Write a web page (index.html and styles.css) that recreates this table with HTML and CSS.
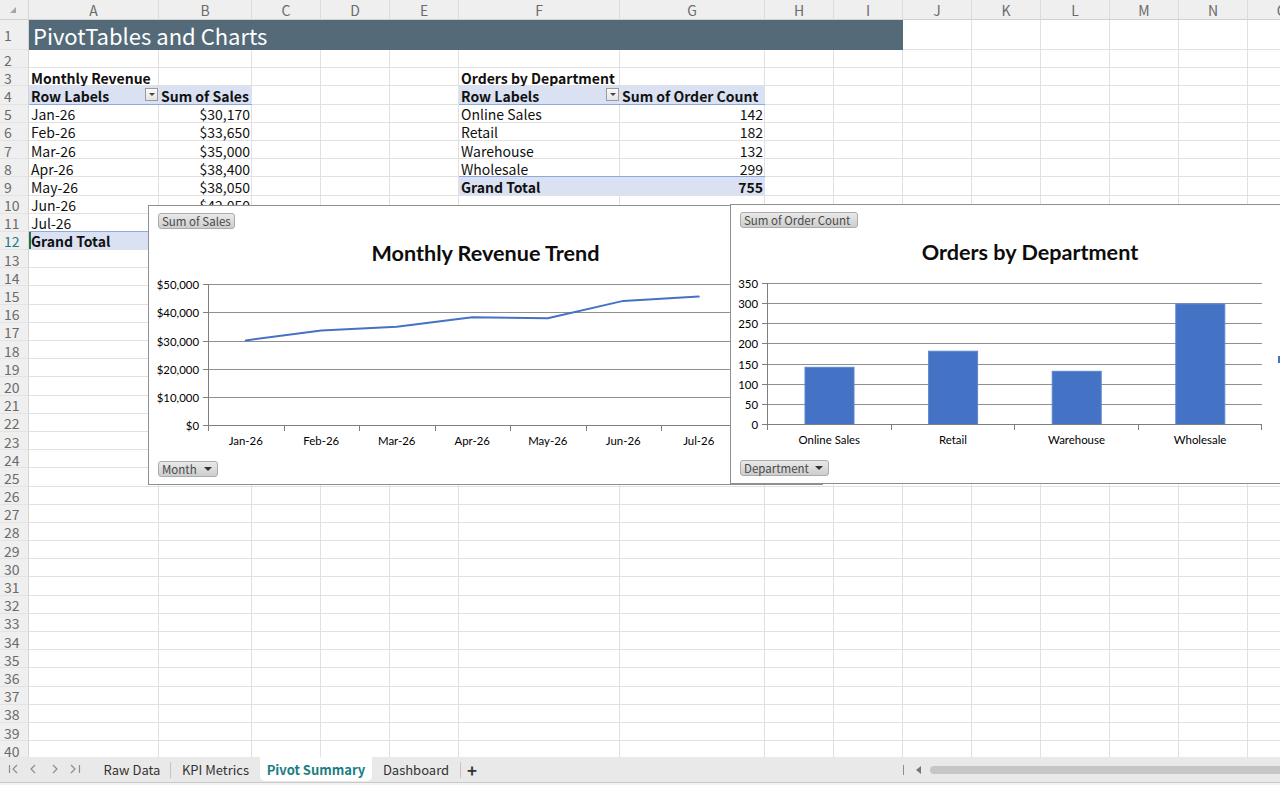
FILE: index.html
```html
<!DOCTYPE html>
<html lang="en">
<head>
<meta charset="utf-8">
<title>Pivot Summary</title>
<link rel="stylesheet" href="styles.css">
</head>
<body>
<div class="app">
  <div class="sheet">
    <div class="corner"><span class="tri"></span></div>
    <div class="ch">A</div><div class="ch">B</div><div class="ch">C</div><div class="ch">D</div><div class="ch">E</div><div class="ch">F</div><div class="ch">G</div><div class="ch">H</div><div class="ch">I</div><div class="ch">J</div><div class="ch">K</div><div class="ch">L</div><div class="ch">M</div><div class="ch">N</div><div class="ch">O</div>

    <div class="rh r1">1</div><div class="title">PivotTables and Charts</div><div class="c s6"></div>
    <div class="rh">2</div><div class="c s15"></div>
    <div class="rh">3</div><div class="c b">Monthly Revenue</div><div class="c s4"></div><div class="c b">Orders by Department</div><div class="c s9"></div>
    <div class="rh">4</div><div class="c ph">Row Labels<span class="dd"></span></div><div class="c ph">Sum of Sales</div><div class="c s3"></div><div class="c ph">Row Labels<span class="dd"></span></div><div class="c ph">Sum of Order Count</div><div class="c s8"></div>
    <div class="rh">5</div><div class="c">Jan-26</div><div class="c num">$30,170</div><div class="c s3"></div><div class="c">Online Sales</div><div class="c num">142</div><div class="c s8"></div>
    <div class="rh">6</div><div class="c">Feb-26</div><div class="c num">$33,650</div><div class="c s3"></div><div class="c">Retail</div><div class="c num">182</div><div class="c s8"></div>
    <div class="rh">7</div><div class="c">Mar-26</div><div class="c num">$35,000</div><div class="c s3"></div><div class="c">Warehouse</div><div class="c num">132</div><div class="c s8"></div>
    <div class="rh">8</div><div class="c">Apr-26</div><div class="c num">$38,400</div><div class="c s3"></div><div class="c">Wholesale</div><div class="c num">299</div><div class="c s8"></div>
    <div class="rh">9</div><div class="c">May-26</div><div class="c num">$38,050</div><div class="c s3"></div><div class="c gt">Grand Total</div><div class="c gt num">755</div><div class="c s8"></div>
    <div class="rh">10</div><div class="c">Jun-26</div><div class="c num">$42,050</div><div class="c s13"></div>
    <div class="rh">11</div><div class="c">Jul-26</div><div class="c num"></div><div class="c s13"></div>
    <div class="rh act">12</div><div class="c gt sel">Grand Total</div><div class="c gt num"></div><div class="c s13"></div>
    <div class="rh">13</div><div class="c s15"></div>
    <div class="rh">14</div><div class="c s15"></div>
    <div class="rh">15</div><div class="c s15"></div>
    <div class="rh">16</div><div class="c s15"></div>
    <div class="rh">17</div><div class="c s15"></div>
    <div class="rh">18</div><div class="c s15"></div>
    <div class="rh">19</div><div class="c s15"></div>
    <div class="rh">20</div><div class="c s15"></div>
    <div class="rh">21</div><div class="c s15"></div>
    <div class="rh">22</div><div class="c s15"></div>
    <div class="rh">23</div><div class="c s15"></div>
    <div class="rh">24</div><div class="c s15"></div>
    <div class="rh">25</div><div class="c s15"></div>
    <div class="rh">26</div><div class="c s15"></div>
    <div class="rh">27</div><div class="c s15"></div>
    <div class="rh">28</div><div class="c s15"></div>
    <div class="rh">29</div><div class="c s15"></div>
    <div class="rh">30</div><div class="c s15"></div>
    <div class="rh">31</div><div class="c s15"></div>
    <div class="rh">32</div><div class="c s15"></div>
    <div class="rh">33</div><div class="c s15"></div>
    <div class="rh">34</div><div class="c s15"></div>
    <div class="rh">35</div><div class="c s15"></div>
    <div class="rh">36</div><div class="c s15"></div>
    <div class="rh">37</div><div class="c s15"></div>
    <div class="rh">38</div><div class="c s15"></div>
    <div class="rh">39</div><div class="c s15"></div>
    <div class="rh">40</div><div class="c s15"></div>

    <div class="chart chart-line">
      <div class="pbtn w-sales">Sum of Sales</div>
      <div class="ctitle">Monthly Revenue Trend</div>
      <svg class="plot" width="673" height="190" viewBox="0 0 673 190">
        <g class="grid">
          <line x1="59.5" y1="19.5" x2="588" y2="19.5"/>
          <line x1="59.5" y1="47.5" x2="588" y2="47.5"/>
          <line x1="59.5" y1="76.5" x2="588" y2="76.5"/>
          <line x1="59.5" y1="104.5" x2="588" y2="104.5"/>
          <line x1="59.5" y1="132.5" x2="588" y2="132.5"/>
        </g>
        <g class="axis">
          <line x1="59.5" y1="19.5" x2="59.5" y2="160.5"/>
          <line x1="54" y1="160.5" x2="588" y2="160.5"/>
          <line x1="54" y1="19.5" x2="59.5" y2="19.5"/>
          <line x1="54" y1="47.5" x2="59.5" y2="47.5"/>
          <line x1="54" y1="76.5" x2="59.5" y2="76.5"/>
          <line x1="54" y1="104.5" x2="59.5" y2="104.5"/>
          <line x1="54" y1="132.5" x2="59.5" y2="132.5"/>
          <line x1="59.5" y1="160.5" x2="59.5" y2="166"/>
          <line x1="135.5" y1="160.5" x2="135.5" y2="166"/>
          <line x1="210.5" y1="160.5" x2="210.5" y2="166"/>
          <line x1="286.5" y1="160.5" x2="286.5" y2="166"/>
          <line x1="361.5" y1="160.5" x2="361.5" y2="166"/>
          <line x1="437.5" y1="160.5" x2="437.5" y2="166"/>
          <line x1="512.5" y1="160.5" x2="512.5" y2="166"/>
          <line x1="588" y1="160.5" x2="588" y2="166"/>
        </g>
        <g class="ylab">
          <text x="50" y="23.5">$50,000</text>
          <text x="50" y="51.5">$40,000</text>
          <text x="50" y="80.5">$30,000</text>
          <text x="50" y="108.5">$20,000</text>
          <text x="50" y="136.5">$10,000</text>
          <text x="50" y="164.5">$0</text>
        </g>
        <g class="xlab">
          <text x="96.75" y="180">Jan-26</text>
          <text x="172.25" y="180">Feb-26</text>
          <text x="247.75" y="180">Mar-26</text>
          <text x="323.25" y="180">Apr-26</text>
          <text x="398.75" y="180">May-26</text>
          <text x="474.25" y="180">Jun-26</text>
          <text x="549.75" y="180">Jul-26</text>
        </g>
        <polyline class="series" points="96.75,75.4 172.25,65.6 247.75,61.8 323.25,52.2 398.75,53.2 474.25,35.9 549.75,31.6"/>
      </svg>
      <div class="pbtn drop w-month">Month<span class="arr"></span></div>
    </div>

    <div class="chart chart-bar">
      <div class="pbtn w-count">Sum of Order Count</div>
      <div class="ctitle">Orders by Department</div>
      <svg class="plot" width="598" height="190" viewBox="0 0 598 190">
        <g class="grid">
          <line x1="36.5" y1="19.5" x2="531" y2="19.5"/>
          <line x1="36.5" y1="39.5" x2="531" y2="39.5"/>
          <line x1="36.5" y1="59.5" x2="531" y2="59.5"/>
          <line x1="36.5" y1="79.5" x2="531" y2="79.5"/>
          <line x1="36.5" y1="100.5" x2="531" y2="100.5"/>
          <line x1="36.5" y1="120.5" x2="531" y2="120.5"/>
          <line x1="36.5" y1="140.5" x2="531" y2="140.5"/>
        </g>
        <g class="bars">
          <rect x="74" y="103.3" width="49" height="57.2"/>
          <rect x="197.6" y="87.2" width="49" height="73.3"/>
          <rect x="321.2" y="107.3" width="49" height="53.2"/>
          <rect x="444.8" y="40" width="49" height="120.5"/>
        </g>
        <g class="axis">
          <line x1="36.5" y1="19.5" x2="36.5" y2="160.5"/>
          <line x1="31" y1="160.5" x2="531" y2="160.5"/>
          <line x1="31" y1="19.5" x2="36.5" y2="19.5"/>
          <line x1="31" y1="39.5" x2="36.5" y2="39.5"/>
          <line x1="31" y1="59.5" x2="36.5" y2="59.5"/>
          <line x1="31" y1="79.5" x2="36.5" y2="79.5"/>
          <line x1="31" y1="100.5" x2="36.5" y2="100.5"/>
          <line x1="31" y1="120.5" x2="36.5" y2="120.5"/>
          <line x1="31" y1="140.5" x2="36.5" y2="140.5"/>
          <line x1="36.5" y1="160.5" x2="36.5" y2="166"/>
          <line x1="160.5" y1="160.5" x2="160.5" y2="166"/>
          <line x1="283.5" y1="160.5" x2="283.5" y2="166"/>
          <line x1="407.5" y1="160.5" x2="407.5" y2="166"/>
          <line x1="530.5" y1="160.5" x2="530.5" y2="166"/>
        </g>
        <g class="ylab">
          <text x="27" y="23.5">350</text>
          <text x="27" y="43.5">300</text>
          <text x="27" y="63.5">250</text>
          <text x="27" y="83.5">200</text>
          <text x="27" y="104.5">150</text>
          <text x="27" y="124.5">100</text>
          <text x="27" y="144.5">50</text>
          <text x="27" y="164.5">0</text>
        </g>
        <g class="xlab">
          <text x="98.3" y="180">Online Sales</text>
          <text x="221.9" y="180">Retail</text>
          <text x="345.5" y="180">Warehouse</text>
          <text x="469.1" y="180">Wholesale</text>
        </g>
        <rect class="legend-key" x="547" y="92" width="7" height="7"/>
      </svg>
      <div class="pbtn drop w-dept">Department<span class="arr"></span></div>
    </div>
  </div>

  <div class="tabbar">
    <svg class="nav" width="94" height="25" viewBox="0 0 94 25">
      <g>
        <line x1="9.5" y1="8" x2="9.5" y2="16"/>
        <polyline points="17,8 13,12 17,16"/>
        <polyline points="35,8 31,12 35,16"/>
        <polyline points="53,8 57,12 53,16"/>
        <polyline points="71,8 75,12 71,16"/>
        <line x1="79.5" y1="8" x2="79.5" y2="16"/>
      </g>
    </svg>
    <div class="tab t1">Raw Data</div>
    <span class="sep"></span>
    <div class="tab t2">KPI Metrics</div>
    <div class="tab t3 active">Pivot Summary</div>
    <div class="tab t4">Dashboard</div>
    <span class="sep"></span>
    <div class="add">+</div>
    <div class="hscroll">
      <span class="hsep"></span>
      <span class="larr"></span>
      <span class="track"></span>
    </div>
  </div>
  <div class="strip"></div>
</div>
</body>
</html>
```

FILE: styles.css
```css
* { box-sizing: border-box; margin: 0; padding: 0; }

body {
  margin: 0;
  width: 1280px;
  height: 785px;
  overflow: hidden;
  background: #ffffff;
  font-family: "Noto Sans CJK SC", "Noto Sans", sans-serif;
  color: #000;
}

.app {
  width: 1280px;
  height: 785px;
  display: flex;
  flex-direction: column;
}

/* ---------- sheet grid ---------- */
.sheet {
  position: relative;
  height: 757px;
  flex: none;
  overflow: hidden;
  display: grid;
  grid-template-columns: 29px 130px 93px 69px 69px 69px 161px 145px 69px 69px 69px 69px 69px 69px 69px 69px;
  grid-template-rows: 20px 30px repeat(39, 18.2px);
  background-color: #ffffff;
  background-image:
    linear-gradient(#e1e1e1, #e1e1e1), linear-gradient(#e1e1e1, #e1e1e1),
    linear-gradient(#e1e1e1, #e1e1e1), linear-gradient(#e1e1e1, #e1e1e1),
    linear-gradient(#e1e1e1, #e1e1e1), linear-gradient(#e1e1e1, #e1e1e1),
    linear-gradient(#e1e1e1, #e1e1e1), linear-gradient(#e1e1e1, #e1e1e1),
    linear-gradient(#e1e1e1, #e1e1e1), linear-gradient(#e1e1e1, #e1e1e1),
    linear-gradient(#e1e1e1, #e1e1e1), linear-gradient(#e1e1e1, #e1e1e1),
    linear-gradient(#e1e1e1, #e1e1e1), linear-gradient(#e1e1e1, #e1e1e1);
  background-size: 1px 100%;
  background-repeat: no-repeat;
  background-position:
    158px 0, 251px 0, 320px 0, 389px 0, 458px 0, 619px 0, 764px 0,
    833px 0, 902px 0, 971px 0, 1040px 0, 1109px 0, 1178px 0, 1247px 0;
}

.corner {
  background: #efefef;
  border-right: 1px solid #d6d6d6;
  border-bottom: 1px solid #d0d0d0;
  padding: 7px 0 0 10px;
}
.tri {
  display: block;
  width: 0;
  height: 0;
  border-left: 6px solid transparent;
  border-bottom: 6px solid #a6a6a6;
}

.ch {
  background: #efefef;
  border-right: 1px solid #dcdcdc;
  border-bottom: 1px solid #d0d0d0;
  color: #6b6b6b;
  font-size: 14px;
  display: flex;
  align-items: center;
  justify-content: center;
}

.rh {
  background: #efefef;
  border-right: 1px solid #d4d4d4;
  border-bottom: 1px solid #e3e3e3;
  color: #6b6b6b;
  font-size: 14px;
  display: flex;
  align-items: center;
  padding: 2px 0 0 4px;
  white-space: nowrap;
}
.rh.r1 { padding-top: 0; }
.rh.act { color: #217a86; }

.c {
  border-bottom: 1px solid #e1e1e1;
  font-size: 14px;
  display: flex;
  align-items: center;
  padding: 2px 2px 0;
  white-space: nowrap;
  min-width: 0;
  color: #111;
}
.s3 { grid-column: span 3; }
.s4 { grid-column: span 4; }
.s6 { grid-column: span 6; }
.s8 { grid-column: span 8; }
.s9 { grid-column: span 9; }
.s13 { grid-column: span 13; }
.s15 { grid-column: span 15; }

.title {
  grid-column: span 9;
  background: #546a79;
  color: #ffffff;
  font-size: 22px;
  display: flex;
  align-items: center;
  padding-left: 4px;
  white-space: nowrap;
}

.b { font-weight: 700; }
.num { justify-content: flex-end; }

.ph {
  background: #d9e1f2;
  font-weight: 700;
  border-bottom: 1px solid #8ea9db;
  justify-content: space-between;
  padding-right: 1px;
}
.ph + .ph { justify-content: flex-start; }

.dd {
  width: 13px;
  height: 13px;
  margin-top: -2px;
  border: 1px solid #9c9c9c;
  background: linear-gradient(#fbfbfb, #e4e4e4);
  display: flex;
  align-items: center;
  justify-content: center;
}
.dd::after {
  content: "";
  border-left: 3px solid transparent;
  border-right: 3px solid transparent;
  border-top: 3px solid #444;
}

.gt {
  background: #d9e1f2;
  font-weight: 700;
  margin-top: -1px;
  border-top: 1px solid #8ea9db;
}
.gt.num { justify-content: flex-end; }
.sel { box-shadow: inset 2px 0 0 #217346; }

/* ---------- charts ---------- */
.chart {
  position: absolute;
  height: 280px;
  background: #ffffff;
  border: 1px solid #8f8f8f;
  display: flex;
  flex-direction: column;
  padding-top: 7px;
  font-family: Lato, "Liberation Sans", sans-serif;
}
.chart-line { left: 148px; top: 205px; width: 675px; }
.chart-bar { left: 730px; top: 204px; width: 600px; }

.pbtn {
  align-self: flex-start;
  margin-left: 9px;
  height: 16px;
  border: 1px solid #ababab;
  border-radius: 3px;
  background: linear-gradient(#e9e9e9, #cdcdcd);
  color: #4a4a4a;
  font-family: "Noto Sans CJK SC", "Noto Sans", sans-serif;
  font-size: 11.5px;
  line-height: 14px;
  padding: 0 3px;
  white-space: nowrap;
  display: flex;
  align-items: center;
}
.w-sales { width: 77px; }
.w-count { width: 118px; }
.w-month { width: 60px; }
.w-dept { width: 89px; }
.pbtn.drop { justify-content: space-between; margin-top: 6px; }
.arr {
  border-left: 4px solid transparent;
  border-right: 4px solid transparent;
  border-top: 4px solid #333;
  margin-right: 2px;
}

.ctitle {
  margin-top: 12px;
  height: 24px;
  line-height: 24px;
  text-align: center;
  font-size: 21.6px;
  font-weight: 700;
  color: #0d0d0d;
  white-space: nowrap;
}

.plot { display: block; flex: none; }
.plot .grid line { stroke: #8f8f8f; stroke-width: 1; shape-rendering: crispEdges; }
.plot .axis line { stroke: #7f7f7f; stroke-width: 1; shape-rendering: crispEdges; }
.plot text { font-family: Lato, "Liberation Sans", sans-serif; font-size: 11.4px; fill: #000; }
.plot .ylab text { text-anchor: end; }
.plot .xlab text { text-anchor: middle; }
.plot .series { fill: none; stroke: #4472c4; stroke-width: 2; stroke-linejoin: round; stroke-linecap: round; }
.plot .bars rect { fill: #4472c4; stroke: #5b86d0; stroke-width: 1; }
.plot .legend-key { fill: #4472c4; }

/* ---------- tab bar ---------- */
.tabbar {
  height: 26px;
  flex: none;
  background: #e9e9e9;
  border-bottom: 1px solid #c9c9c9;
  display: flex;
  align-items: stretch;
  font-family: "Noto Sans CJK SC", "Noto Sans", sans-serif;
  font-size: 13px;
  color: #333;
}
.nav { flex: none; display: block; }
.nav g { fill: none; stroke: #8e8e8e; stroke-width: 1.2; }

.tab {
  display: flex;
  align-items: center;
  justify-content: center;
  height: 24px;
  white-space: nowrap;
}
.t1 { width: 76px; }
.t2 { width: 89px; }
.t3 { width: 112px; }
.t4 { width: 88px; }
.tab.active {
  background: #ffffff;
  color: #1b7d82;
  font-weight: 700;
  border-radius: 0 0 5px 5px;
}
.sep {
  width: 1px;
  height: 16px;
  align-self: center;
  background: #c4c4c4;
  flex: none;
}
.add {
  width: 22px;
  display: flex;
  align-items: center;
  justify-content: center;
  font-size: 17px;
  font-weight: 700;
  color: #333;
}
.hscroll {
  margin-left: auto;
  width: 377px;
  display: flex;
  align-items: center;
}
.hsep {
  width: 1px;
  height: 10px;
  background: #8c8c8c;
  flex: none;
}
.larr {
  margin-left: 12px;
  width: 0;
  height: 0;
  border-top: 4px solid transparent;
  border-bottom: 4px solid transparent;
  border-right: 5px solid #777;
  flex: none;
}
.track {
  margin-left: 9px;
  flex: 1;
  height: 8px;
  border-radius: 4px;
  background: #c6c6c6;
  margin-right: -20px;
}
.strip {
  height: 2px;
  flex: none;
  background: #f2f2f2;
}
```
